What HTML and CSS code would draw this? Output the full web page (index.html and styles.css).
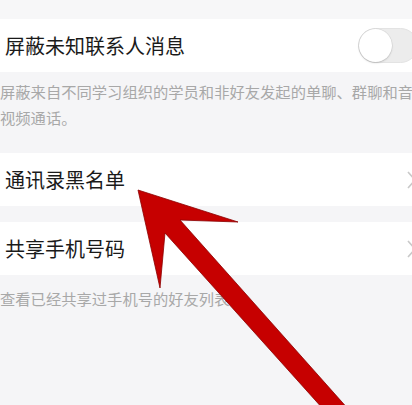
FILE: index.html
```html
<!DOCTYPE html>
<html lang="zh">
<head>
<meta charset="utf-8">
<link rel="stylesheet" href="styles.css">
</head>
<body>
<div class="page">
  <div class="top-gap"></div>
  <div class="row">
    <span class="title">屏蔽未知联系人消息</span>
    <span class="toggle"><span class="knob"></span></span>
  </div>
  <div class="desc desc-first">屏蔽来自不同学习组织的学员和非好友发起的单聊、群聊和音视频通话。</div>
  <div class="row">
    <span class="title">通讯录黑名单</span>
    <svg class="chevron" viewBox="0 0 9 18" width="9" height="18"><polyline points="1,1 8,9 1,17" fill="none" stroke="#c9c9c9" stroke-width="1.6"/></svg>
  </div>
  <div class="gap"></div>
  <div class="row">
    <span class="title">共享手机号码</span>
    <svg class="chevron" viewBox="0 0 9 18" width="9" height="18"><polyline points="1,1 8,9 1,17" fill="none" stroke="#c9c9c9" stroke-width="1.6"/></svg>
  </div>
  <div class="desc desc-second">查看已经共享过手机号的好友列表</div>
</div>
<svg class="arrow" viewBox="0 0 412 405" width="412" height="405">
  <polygon points="138,190 238,222 180,220 358,420 333,420 165,233 160,288" fill="#c60000" stroke="#8c0000" stroke-width="0.8" stroke-linejoin="miter"/>
</svg>
</body>
</html>
```
FILE: styles.css
```css
html, body {
  margin: 0;
  padding: 0;
}
body {
  width: 412px;
  height: 405px;
  overflow: hidden;
  background: #f5f5f7;
  position: relative;
  font-family: "Noto Sans CJK SC", "Noto Sans", sans-serif;
}
.page {
  width: 424px;
}
.top-gap {
  height: 19px;
  background: #f7f7f8;
}
.row {
  height: 53px;
  background: #ffffff;
  display: flex;
  align-items: center;
  justify-content: space-between;
  padding-left: 5px;
}
.title {
  font-size: 20px;
  color: #1a1a1a;
  line-height: 1;
}
.toggle {
  width: 60px;
  height: 35px;
  margin-right: 6px;
  border-radius: 18px;
  background: #ececec;
  border: 1px solid #e3e3e3;
  box-sizing: border-box;
  display: flex;
  align-items: center;
}
.knob {
  width: 33px;
  height: 33px;
  border-radius: 50%;
  background: #ffffff;
  box-shadow: 0 1px 2px rgba(0,0,0,0.16), 0 0 0 0.5px rgba(0,0,0,0.08);
}
.chevron {
  margin-right: 8px;
}
.desc {
  font-size: 15.3px;
  line-height: 26px;
  color: #a8a8a8;
  padding-left: 0;
}
.desc-first {
  padding-top: 6px;
  padding-bottom: 23px;
}
.gap {
  height: 16px;
}
.desc-second {
  padding-top: 10px;
}
.arrow {
  position: absolute;
  left: 0;
  top: 0;
}
```
